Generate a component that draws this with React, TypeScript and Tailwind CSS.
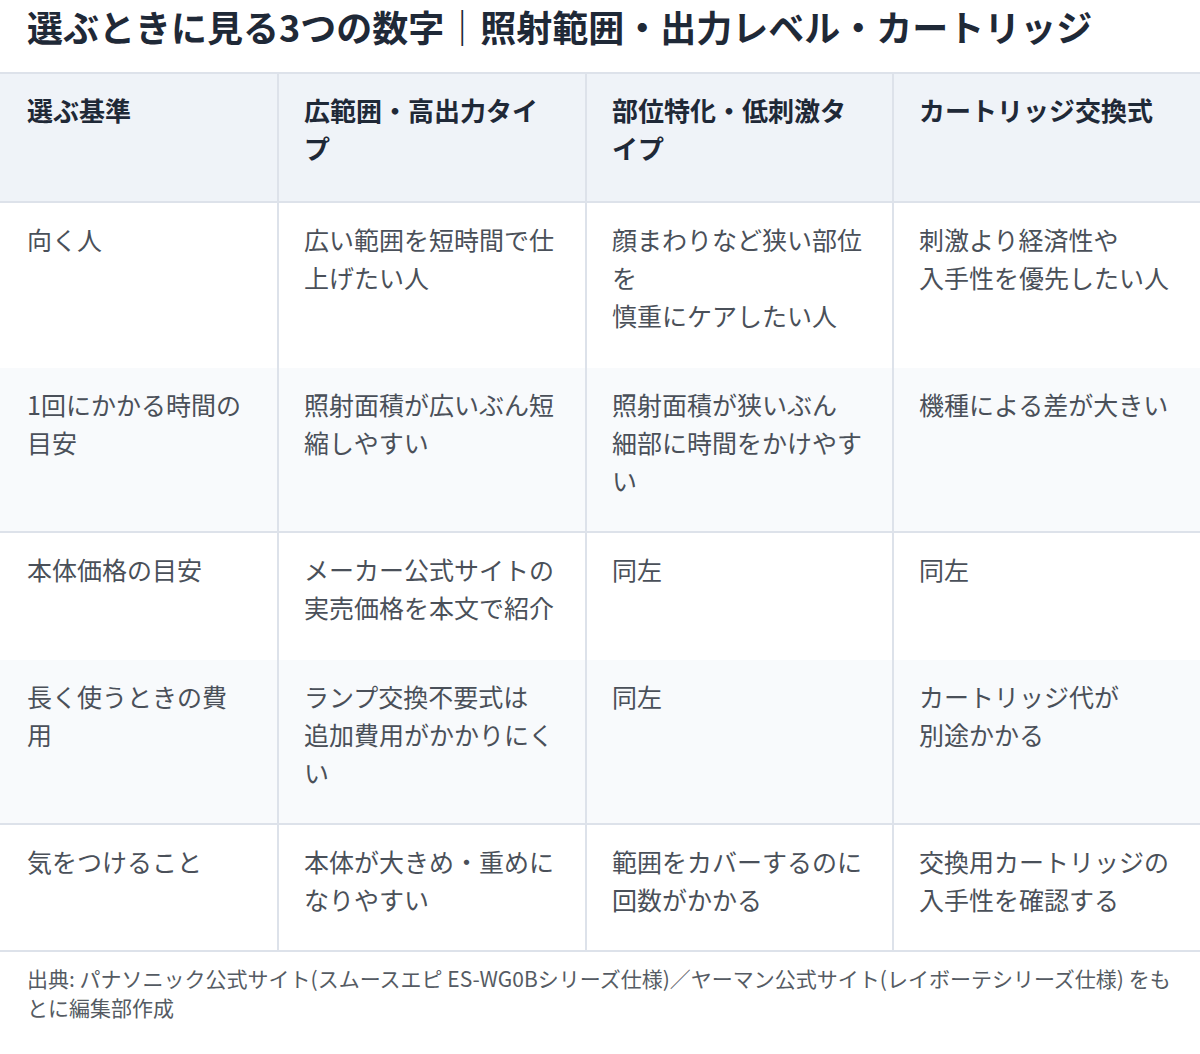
import React from "react";

type Row = {
  label: string[];
  cells: string[][];
  shade: boolean;
  divider: boolean;
};

const headers: string[][] = [
  ["選ぶ基準"],
  ["広範囲・高出力タイ", "プ"],
  ["部位特化・低刺激タ", "イプ"],
  ["カートリッジ交換式"],
];

const rows: Row[] = [
  {
    label: ["向く人"],
    cells: [
      ["広い範囲を短時間で仕", "上げたい人"],
      ["顔まわりなど狭い部位", "を", "慎重にケアしたい人"],
      ["刺激より経済性や", "入手性を優先したい人"],
    ],
    shade: false,
    divider: false,
  },
  {
    label: ["1回にかかる時間の", "目安"],
    cells: [
      ["照射面積が広いぶん短", "縮しやすい"],
      ["照射面積が狭いぶん", "細部に時間をかけやす", "い"],
      ["機種による差が大きい"],
    ],
    shade: true,
    divider: true,
  },
  {
    label: ["本体価格の目安"],
    cells: [["メーカー公式サイトの", "実売価格を本文で紹介"], ["同左"], ["同左"]],
    shade: false,
    divider: false,
  },
  {
    label: ["長く使うときの費", "用"],
    cells: [
      ["ランプ交換不要式は", "追加費用がかかりにく", "い"],
      ["同左"],
      ["カートリッジ代が", "別途かかる"],
    ],
    shade: true,
    divider: true,
  },
  {
    label: ["気をつけること"],
    cells: [
      ["本体が大きめ・重めに", "なりやすい"],
      ["範囲をカバーするのに", "回数がかかる"],
      ["交換用カートリッジの", "入手性を確認する"],
    ],
    shade: false,
    divider: true,
  },
];

function Lines({ lines }: { lines: string[] }) {
  return (
    <>
      {lines.map((l, i) => (
        <div key={i} className="whitespace-nowrap">
          {l}
        </div>
      ))}
    </>
  );
}

export default function App() {
  return (
    <div
      className="w-[1200px] min-h-[1054px] bg-white"
      style={{ fontFamily: '"Noto Sans CJK JP", "Noto Sans", sans-serif' }}
    >
      {/* title */}
      <h1 className="pl-[27px] text-[36px] leading-[52px] font-bold text-[#1f2937] mb-[20px]">
        選ぶときに見る3つの数字｜照射範囲・出力レベル・カートリッジ
      </h1>

      {/* table */}
      <div className="border-t-2 border-[#dde2ea]">
        <div className="grid grid-cols-[277px_308px_307px_308px] bg-[#eff3f8] border-b-2 border-[#dde2ea] text-[26px] leading-[38px] font-bold text-[#1f2937]">
          {headers.map((h, i) => (
            <div
              key={i}
              className={
                i === 0
                  ? "pl-[27px] pr-[27px] pt-[17px] pb-[34px]"
                  : "border-l-2 border-[#dde2ea] pl-[25px] pr-[25px] pt-[17px] pb-[34px]"
              }
            >
              <Lines lines={h} />
            </div>
          ))}
        </div>

        {rows.map((r, ri) => {
          const pad = r.divider ? "pt-[17px] pb-[32px]" : "pt-[17px] pb-[34px]";
          return (
            <div
              key={ri}
              className={`grid grid-cols-[277px_308px_307px_308px] text-[25px] leading-[38px] text-[#4a5059] ${
                r.shade ? "bg-[#f8fafc]" : "bg-white"
              } ${r.divider ? "border-b-2 border-[#dde2ea]" : ""}`}
            >
              <div className={`pl-[27px] pr-[27px] ${pad}`}>
                <Lines lines={r.label} />
              </div>
              {r.cells.map((c, ci) => (
                <div
                  key={ci}
                  className={`border-l-2 border-[#dde2ea] pl-[25px] pr-[25px] ${pad}`}
                >
                  <Lines lines={c} />
                </div>
              ))}
            </div>
          );
        })}
      </div>

      {/* source note */}
      <p className="px-[27px] pt-[12px] text-[21px] leading-[29px] text-[#555b63]">
        出典: パナソニック公式サイト(スムースエピ ES-WG0Bシリーズ仕様)／ヤーマン公式サイト(レイボーテシリーズ仕様) をも
        <br />
        とに編集部作成
      </p>
    </div>
  );
}
